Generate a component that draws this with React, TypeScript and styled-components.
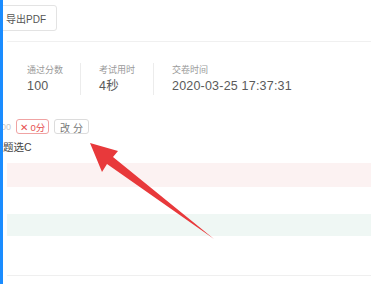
import styled, { createGlobalStyle } from 'styled-components';

const GlobalStyle = createGlobalStyle`
  html, body {
    margin: 0;
    padding: 0;
    background: #fff;
  }
  body {
    font-family: "Liberation Sans", "Noto Sans CJK SC", sans-serif;
  }
`;

const Page = styled.div`
  position: relative;
  width: 371px;
  height: 289px;
  overflow: hidden;
  background: #fff;
`;

const Panel = styled.div`
  height: 284px;
  border-left: 3px solid #1a8cff;
  box-sizing: border-box;
  overflow: hidden;
`;

const Toolbar = styled.div`
  display: flex;
  align-items: flex-start;
  height: 42px;
  padding-top: 5px;
  box-sizing: border-box;
  border-bottom: 1px solid #f0f0f0;
  margin-left: 4px;
`;

const ExportButton = styled.button`
  height: 26px;
  margin-left: -10px;
  padding: 0 10px 0 8px;
  background: #fff;
  border: 1px solid #e3e3e3;
  border-radius: 3px;
  color: #555;
  font-family: inherit;
  font-size: 10px;
  cursor: pointer;
`;

const Stats = styled.div`
  display: flex;
  margin-top: 21px;
  padding-left: 24px;
`;

const Stat = styled.div<{ $width: number; $first?: boolean; $last?: boolean }>`
  width: ${p => p.$width}px;
  box-sizing: border-box;
  padding-left: ${p => (p.$first ? 0 : 18)}px;
  border-right: ${p => (p.$last ? 'none' : '1px solid #ececec')};
  display: flex;
  flex-direction: column;
  white-space: nowrap;
`;

const StatLabel = styled.div`
  height: 14px;
  line-height: 14px;
  font-size: 9px;
  color: #9a9a9a;
`;

const StatValue = styled.div`
  height: 18px;
  line-height: 18px;
  font-size: 12.5px;
  letter-spacing: 0.2px;
  color: #5a5a5a;
`;

const ScoreRow = styled.div`
  display: flex;
  align-items: center;
  margin-top: 24px;
  height: 15px;
`;

const FaintScore = styled.span`
  width: 15px;
  font-size: 9px;
  color: #c8c8c8;
  margin-left: -2px;
`;

const ScoreTag = styled.span`
  display: inline-flex;
  align-items: center;
  justify-content: center;
  width: 33px;
  height: 15px;
  box-sizing: border-box;
  border: 1px solid #f0a3a3;
  border-radius: 3px;
  color: #e65050;
  font-size: 9.5px;
`;

const EditButton = styled.button`
  width: 35px;
  height: 15px;
  margin-left: 5px;
  padding: 0;
  box-sizing: border-box;
  background: #fff;
  border: 1px solid #dcdcdc;
  border-radius: 3px;
  color: #777;
  font-family: inherit;
  font-size: 10px;
  letter-spacing: 3px;
  text-indent: 3px;
`;

const Answer = styled.div`
  margin-top: 5px;
  height: 16px;
  line-height: 16px;
  font-size: 10.5px;
  color: #444;
`;

const Band = styled.div<{ $bg: string; $top: number; $height: number }>`
  margin-left: 4px;
  margin-top: ${p => p.$top}px;
  height: ${p => p.$height}px;
  background: ${p => p.$bg};
`;

const BottomLine = styled.div`
  margin-left: 4px;
  margin-top: 39px;
  border-top: 1px solid #efefef;
`;

const ArrowLayer = styled.svg`
  position: absolute;
  left: 0;
  top: 0;
  pointer-events: none;
`;

export default function App() {
  return (
    <Page>
      <GlobalStyle />
      <Panel>
        <Toolbar>
          <ExportButton>导出PDF</ExportButton>
        </Toolbar>
        <Stats>
          <Stat $width={54} $first>
            <StatLabel>通过分数</StatLabel>
            <StatValue>100</StatValue>
          </Stat>
          <Stat $width={73}>
            <StatLabel>考试用时</StatLabel>
            <StatValue>4秒</StatValue>
          </Stat>
          <Stat $width={160} $last>
            <StatLabel>交卷时间</StatLabel>
            <StatValue>2020-03-25 17:37:31</StatValue>
          </Stat>
        </Stats>
        <ScoreRow>
          <FaintScore>00</FaintScore>
          <ScoreTag>✕ 0分</ScoreTag>
          <EditButton>改分</EditButton>
        </ScoreRow>
        <Answer>题选C</Answer>
        <Band $bg="#fcf2f2" $top={8} $height={24} />
        <Band $bg="#eff7f4" $top={27} $height={22} />
        <BottomLine />
      </Panel>
      <ArrowLayer width="371" height="289" viewBox="0 0 371 289">
        <polygon
          points="90,143 118,151 113,157 214,239 107,164 102,172"
          fill="#e8393b"
        />
      </ArrowLayer>
    </Page>
  );
}
